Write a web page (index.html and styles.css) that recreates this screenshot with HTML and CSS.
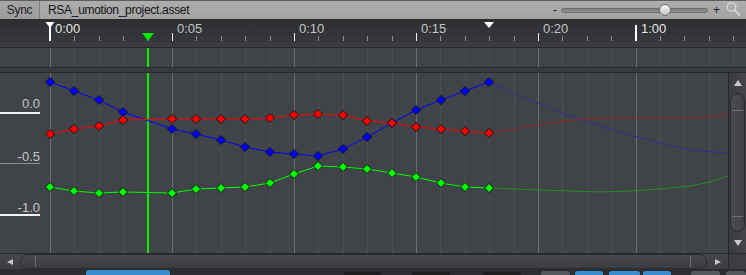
FILE: index.html
```html
<!doctype html>
<html lang="en">
  <head>
    <meta charset="UTF-8" />
    <meta name="viewport" content="width=device-width, initial-scale=1.0" />
    <title>RSA_umotion_project.asset</title>
    <link rel="stylesheet" href="styles.css">
  </head>
  <body>
    <div class="window">
      <div class="toolbar">
        <div class="sync">Sync</div>
        <div class="title">RSA_umotion_project.asset</div>
        <div class="zoom">
          <span class="zoom-sign">-</span>
          <div class="zoom-track"><div class="zoom-knob"></div></div>
          <span class="zoom-sign plus">+</span>
          <svg class="search" width="17" height="17" viewBox="0 0 17 17">
            <circle cx="6.5" cy="6" r="4.3" fill="none" stroke="#d6d6d6" stroke-width="1.5" />
            <line x1="9.6" y1="9.2" x2="14.5" y2="14" stroke="#d6d6d6" stroke-width="2" stroke-linecap="round" />
          </svg>
        </div>
      </div>
      <svg class="ruler" id="ruler" width="746" height="23"></svg>
      <div class="band"></div>
      <svg class="events" id="events" width="746" height="19"></svg>
      <div class="band lower"></div>
      <div class="main">
        <svg class="graph" id="graph" width="728" height="180"></svg>
        <div class="vscroll">
          <div class="arrow-box"><div class="arrow up"></div></div>
          <div class="vthumb"></div>
          <div class="arrow-box bottom"><div class="arrow down"></div></div>
        </div>
      </div>
      <div class="hscroll">
        <div class="arrow-box side"><div class="arrow left"></div></div>
        <div class="hthumb"></div>
        <div class="arrow-box side right-box"><div class="arrow right"></div></div>
        <div class="corner"></div>
      </div>
      <div class="tabs">
        <div class="tab blue t1"></div>
        <div class="tab dark t2"></div>
        <div class="tab dark t3"></div>
        <div class="tab dark t4"></div>
        <div class="tab gray t5"></div>
        <div class="tab blue t6"></div>
        <div class="tab blue t7"></div>
        <div class="tab blue t8"></div>
        <div class="tab gray t9"></div>
        <div class="tab gray t10"></div>
      </div>
    </div>

    <script>
      // time ruler: one tick every 24.4px, labels on the big ones
      let ticks = [];
      for (let i = 0; i <= 28; i++) ticks.push(Math.round(50 + i * 24.4));
      let labels = { 0: "0:00", 5: "0:05", 10: "0:10", 15: "0:15", 20: "0:20", 24: "1:00" };
      let playhead = 148;

      let curves = [
        {
          color: "#0000ff",
          tail: "#2e2e96",
          keys: [[50,82],[74,91],[99,100],[123,112],[172,129],[196,134],[221,140],[245,147],[270,152],[294,154],[318,156],[343,149],[367,137],[392,123],[416,110],[441,100],[465,91],[489,82]],
          after: [[489,82],[510,92],[540,104],[570,116],[600,126],[630,135],[660,143],[690,150],[728,153]]
        },
        {
          color: "#ff0000",
          tail: "#8a2a2a",
          keys: [[50,134],[74,129],[99,126],[123,120],[172,119],[196,119],[221,119],[245,119],[270,118],[294,115],[318,114],[343,115],[367,121],[392,123],[416,127],[441,129],[465,131],[489,133]],
          after: [[489,133],[520,128],[555,122],[585,119],[620,118],[690,118],[728,115]]
        },
        {
          color: "#00ff00",
          tail: "#2a8a2a",
          keys: [[50,187],[74,191],[99,193],[123,192],[172,193],[196,189],[221,188],[245,187],[270,183],[294,174],[318,166],[343,167],[367,169],[392,173],[416,177],[441,183],[465,187],[489,188]],
          after: [[489,188],[540,190],[600,192],[630,191],[660,189],[690,186],[710,182],[728,176]]
        }
      ];

      function line(x1, y1, x2, y2, color, w) {
        return `<line x1="${x1}" y1="${y1}" x2="${x2}" y2="${y2}" stroke="${color}" stroke-width="${w}" />`;
      }

      function isMajor(i) {
        return labels[i] !== undefined;
      }

      function drawRuler() {
        let s = "";
        ticks.forEach((x, i) => {
          let px = x + 0.5;
          if (i === 0) s += line(x, 3, x, 22, "#ffffff", 2);
          else if (i === 24) s += line(x, 6, x, 22, "#ffffff", 2);
          else if (isMajor(i)) s += line(px, 14, px, 22, "#f0f0f0", 1);
          else s += line(px, 17, px, 22, "#8b8d90", 1);
          if (isMajor(i)) {
            let fill = i === 0 || i === 24 ? "#e6e6e6" : "#c4c4c4";
            s += `<text x="${x + 5}" y="14" fill="${fill}" class="tick-label">${labels[i]}</text>`;
          }
        });
        s += `<polygon points="45.5,3 54.5,3 50,9" fill="#ffffff" />`;
        s += `<polygon points="484,3 494,3 489,9" fill="#ffffff" />`;
        s += `<polygon points="142,14 154,14 148,22" fill="#00e600" />`;
        document.getElementById("ruler").innerHTML = s;
      }

      function gridLines(y1, y2) {
        let s = "";
        ticks.forEach((x, i) => {
          let color = isMajor(i) ? "#6a6c70" : "#4b4e52";
          s += line(x + 0.5, y1, x + 0.5, y2, color, 1);
        });
        return s;
      }

      function drawEvents() {
        let s = gridLines(0, 19);
        s += line(playhead, 0, playhead, 19, "#00ee00", 2);
        document.getElementById("events").innerHTML = s;
      }

      function diamond(x, y, color) {
        let r = 4.6;
        return `<polygon points="${x},${y - r} ${x + r},${y} ${x},${y + r} ${x - r},${y}" fill="${color}" stroke="#141414" stroke-width="1" />`;
      }

      function drawGraph() {
        let s = '<g transform="translate(0,-73)">';
        s += gridLines(73, 253);

        // value axis
        s += `<text x="40" y="108" class="axis-label">0.0</text>`;
        s += line(0, 113, 40, 113, "#f2f2f2", 2);
        s += `<text x="40" y="161" class="axis-label">-0.5</text>`;
        s += line(0, 163.5, 40, 163.5, "#8e9094", 1);
        s += `<text x="40" y="212" class="axis-label">-1.0</text>`;
        s += line(0, 215, 40, 215, "#f2f2f2", 2);

        s += line(playhead, 73, playhead, 253, "#00ee00", 2);

        curves.forEach(c => {
          let after = c.after.map(p => p.join(",")).join(" ");
          s += `<polyline points="${after}" fill="none" stroke="${c.tail}" stroke-width="1" />`;
          let keys = c.keys.map(p => p.join(",")).join(" ");
          s += `<polyline points="${keys}" fill="none" stroke="${c.color}" stroke-width="1" />`;
        });
        curves.forEach(c => {
          c.keys.forEach(p => (s += diamond(p[0], p[1], c.color)));
        });
        s += "</g>";
        document.getElementById("graph").innerHTML = s;
      }

      drawRuler();
      drawEvents();
      drawGraph();
    </script>
  </body>
</html>
```

FILE: styles.css
```css
body {
  margin: 0;
  background: #2b2d30;
  font-family: "Liberation Sans", Arial, sans-serif;
}
.window {
  width: 746px;
  height: 275px;
  display: flex;
  flex-direction: column;
  overflow: hidden;
}
.toolbar {
  height: 19px;
  box-sizing: border-box;
  border-top: 1px solid #5e5e5e;
  background: linear-gradient(#adadad, #a3a3a3);
  display: flex;
  align-items: center;
  flex-shrink: 0;
}
.sync {
  width: 40px;
  height: 100%;
  box-sizing: border-box;
  border-right: 1px solid #7f7f7f;
  background: linear-gradient(#a6a6a6, #9c9c9c);
  color: #222;
  font-size: 12px;
  letter-spacing: -0.3px;
  display: flex;
  align-items: center;
  justify-content: center;
}
.title {
  padding-left: 8px;
  font-size: 12px;
  letter-spacing: -0.3px;
  color: #141414;
}
.zoom {
  margin-left: auto;
  display: flex;
  align-items: center;
  padding-right: 4px;
}
.zoom-sign {
  width: 8px;
  font-size: 12px;
  color: #1c1c1c;
  line-height: 12px;
}
.zoom-sign.plus {
  width: 7px;
  margin-left: 5px;
}
.zoom-track {
  position: relative;
  width: 147px;
  height: 5px;
  box-sizing: border-box;
  border: 1px solid #6e6e6e;
  border-radius: 3px;
  background: linear-gradient(#7c7c7c, #959595);
}
.zoom-knob {
  position: absolute;
  left: 97px;
  top: -5px;
  width: 12px;
  height: 12px;
  box-sizing: border-box;
  border: 1px solid #707070;
  border-radius: 50%;
  background: linear-gradient(#f6f6f6, #c4c4c4);
}
.search {
  margin-left: 5px;
  margin-top: -1px;
}
.ruler {
  display: block;
  flex-shrink: 0;
  background: linear-gradient(#2c2e31, #36383b);
}
.tick-label {
  font-family: "Liberation Sans", Arial, sans-serif;
  font-size: 13px;
}
.axis-label {
  font-family: "Liberation Sans", Arial, sans-serif;
  font-size: 13px;
  fill: #c6c6c6;
  text-anchor: end;
}
.band {
  height: 5px;
  flex-shrink: 0;
  background: #393b3e;
  border-bottom: 1px solid #26282a;
}
.band.lower {
  height: 4px;
  border-top: 1px solid #26282a;
}
.events {
  display: block;
  flex-shrink: 0;
  background: #404347;
}
.main {
  height: 180px;
  display: flex;
  flex-shrink: 0;
}
.graph {
  display: block;
  background: #404347;
}
.vscroll {
  width: 17px;
  border-left: 1px solid #26282a;
  background: linear-gradient(to right, #3a3c3f, #434548);
  display: flex;
  flex-direction: column;
}
.arrow-box {
  height: 20px;
  display: flex;
  align-items: center;
  justify-content: center;
}
.arrow-box.bottom {
  margin-top: auto;
  height: 21px;
}
.arrow {
  width: 0;
  height: 0;
}
.arrow.up {
  border-left: 4px solid transparent;
  border-right: 4px solid transparent;
  border-bottom: 6px solid #c9c9c9;
}
.arrow.down {
  border-left: 4px solid transparent;
  border-right: 4px solid transparent;
  border-top: 6px solid #c9c9c9;
}
.arrow.left {
  border-top: 3.5px solid transparent;
  border-bottom: 3.5px solid transparent;
  border-right: 6px solid #c9c9c9;
}
.arrow.right {
  border-top: 3.5px solid transparent;
  border-bottom: 3.5px solid transparent;
  border-left: 6px solid #c9c9c9;
}
.vthumb {
  position: relative;
  height: 139px;
  margin: 0 1px;
  box-sizing: border-box;
  border: 1px solid #292b2e;
  border-radius: 8px;
  background: linear-gradient(to right, #4a4c50, #3e4043);
}
.vthumb::before,
.vthumb::after {
  content: "";
  position: absolute;
  left: 1px;
  right: 1px;
  height: 1px;
  background: #6c6e72;
}
.vthumb::before {
  top: 16px;
}
.vthumb::after {
  bottom: 14px;
}
.hscroll {
  height: 16px;
  box-sizing: border-box;
  flex-shrink: 0;
  border-top: 1px solid #26282a;
  background: linear-gradient(#45474a, #3a3c3f);
  display: flex;
}
.arrow-box.side {
  width: 20px;
  height: 100%;
}
.arrow-box.right-box {
  width: 21px;
  justify-content: flex-start;
  padding-left: 8px;
  box-sizing: border-box;
}
.hthumb {
  position: relative;
  width: 687px;
  box-sizing: border-box;
  border: 1px solid #2a2c2f;
  border-radius: 8px;
  background: linear-gradient(#484a4e, #3b3d40);
}
.hthumb::before,
.hthumb::after {
  content: "";
  position: absolute;
  top: 1px;
  bottom: 1px;
  width: 1px;
  background: #6c6e72;
}
.hthumb::before {
  left: 14px;
}
.hthumb::after {
  right: 15px;
}
.corner {
  width: 17px;
  border-left: 1px solid #26282a;
  background: #3c3e41;
}
.tabs {
  height: 6px;
  flex-shrink: 0;
  background: #2b2d30;
  display: flex;
  align-items: flex-end;
}
.tab {
  height: 4px;
  border-radius: 3px 3px 0 0;
}
.tab.blue {
  background: #3a8dcf;
}
.tab.dark {
  height: 3px;
  background: #1d1e20;
}
.tab.gray {
  background: #55585c;
}
.t1 { margin-left: 86px; width: 84px; height: 5px; }
.t2 { margin-left: 174px; width: 37px; }
.t3 { margin-left: 31px; width: 38px; }
.t4 { margin-left: 33px; width: 38px; }
.t5 { margin-left: 20px; width: 29px; }
.t6 { margin-left: 5px; width: 28px; }
.t7 { margin-left: 6px; width: 31px; }
.t8 { margin-left: 3px; width: 28px; }
.t9 { margin-left: 20px; width: 29px; }
.t10 { margin-left: 6px; width: 20px; }
```
